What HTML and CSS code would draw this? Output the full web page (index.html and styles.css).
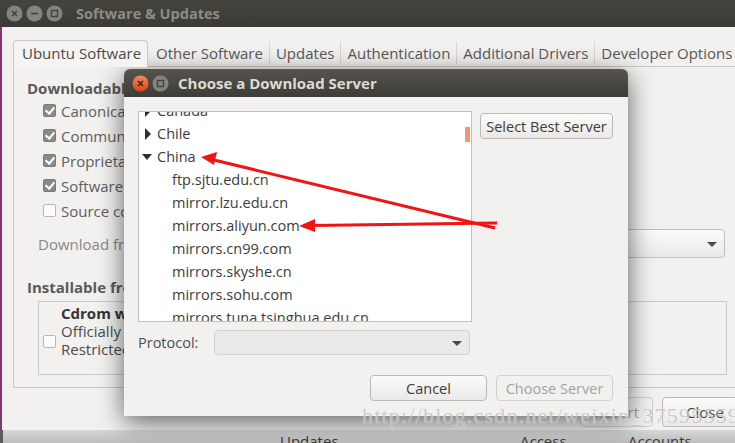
FILE: index.html
```html
<!DOCTYPE html>
<html lang="en">
<head>
    <meta charset="UTF-8">
    <title>Software &amp; Updates</title>
    <link rel="stylesheet" href="styles.css">
</head>
<body>
    <div class="screen">
        <div class="main">
            <div class="titlebar">
                <div class="wbtns">
                    <svg class="wbtn" width="17" height="17" viewBox="0 0 17 17"><circle cx="8.5" cy="8.5" r="8" fill="#85837e"/><path d="M6 6 L11 11 M11 6 L6 11" stroke="#45433f" stroke-width="1.6"/></svg>
                    <svg class="wbtn" width="17" height="17" viewBox="0 0 17 17"><circle cx="8.5" cy="8.5" r="8" fill="#85837e"/><path d="M5 8.5 H12" stroke="#45433f" stroke-width="1.6"/></svg>
                    <svg class="wbtn" width="17" height="17" viewBox="0 0 17 17"><circle cx="8.5" cy="8.5" r="8" fill="#85837e"/><rect x="5.5" y="5.5" width="6" height="6" fill="none" stroke="#45433f" stroke-width="1.4"/></svg>
                </div>
                <span class="title">Software &amp; Updates</span>
            </div>
            <div class="body">
                <div class="tabs">
                    <div class="tab active">Ubuntu Software</div>
                    <div class="tab">Other Software</div>
                    <div class="tab">Updates</div>
                    <div class="tab">Authentication</div>
                    <div class="tab">Additional Drivers</div>
                    <div class="tab">Developer Options</div>
                </div>
                <div class="panel">
                    <div class="section-title">Downloadable from the Internet</div>
                    <ul class="checks">
                        <li><span class="cb checked"></span>Canonical-supported free and open-source software (main)</li>
                        <li><span class="cb checked"></span>Community-maintained free and open-source software (universe)</li>
                        <li><span class="cb checked"></span>Proprietary drivers for devices (restricted)</li>
                        <li><span class="cb checked"></span>Software restricted by copyright or legal issues (multiverse)</li>
                        <li><span class="cb"></span>Source code</li>
                    </ul>
                    <div class="download-row">
                        <span class="dim">Download from:</span>
                        <div class="combo">Server for China<span class="arrow"></span></div>
                    </div>
                    <div class="section-title">Installable from CD-ROM/DVD</div>
                    <div class="cdrom">
                        <span class="cb"></span>
                        <div class="cdrom-text">
                            <b>Cdrom with Ubuntu 16.04 'Xenial Xerus'</b>
                            <span>Officially supported</span>
                            <span>Restricted copyright</span>
                        </div>
                    </div>
                </div>
                <div class="actions">
                    <button class="btn" disabled>Revert</button>
                    <button class="btn">Close</button>
                </div>
            </div>
        </div>
        <div class="behind">
            <span class="b-updates">Updates</span>
            <span class="b-access">Access</span>
            <span class="b-accounts">Accounts</span>
        </div>

        <div class="dialog">
            <div class="dlg-titlebar">
                <svg width="17" height="17" viewBox="0 0 17 17"><defs><linearGradient id="og" x1="0" y1="0" x2="0" y2="1"><stop offset="0" stop-color="#f7875a"/><stop offset="1" stop-color="#dc4413"/></linearGradient></defs><circle cx="8.5" cy="8.5" r="8" fill="url(#og)"/><path d="M6 6 L11 11 M11 6 L6 11" stroke="#3a2a22" stroke-width="1.6"/></svg>
                <svg width="17" height="17" viewBox="0 0 17 17"><circle cx="8.5" cy="8.5" r="8" fill="#85837e"/><rect x="5.5" y="5.5" width="6" height="6" fill="none" stroke="#45433f" stroke-width="1.4"/></svg>
                <span class="dlg-title">Choose a Download Server</span>
            </div>
            <div class="dlg-body">
                <div class="dlg-top">
                    <div class="tree">
                        <div class="tree-rows">
                            <div class="row country"><span class="exp right"></span>Canada</div>
                            <div class="row country"><span class="exp right"></span>Chile</div>
                            <div class="row country"><span class="exp down"></span>China</div>
                            <div class="row mirror">ftp.sjtu.edu.cn</div>
                            <div class="row mirror">mirror.lzu.edu.cn</div>
                            <div class="row mirror">mirrors.aliyun.com</div>
                            <div class="row mirror">mirrors.cn99.com</div>
                            <div class="row mirror">mirrors.skyshe.cn</div>
                            <div class="row mirror">mirrors.sohu.com</div>
                            <div class="row mirror">mirrors.tuna.tsinghua.edu.cn</div>
                        </div>
                        <span class="scroll-ind"></span>
                    </div>
                    <button class="btn best">Select Best Server</button>
                </div>
                <div class="protocol-row">
                    <span class="proto-label">Protocol:</span>
                    <div class="combo off"><span class="arrow"></span></div>
                </div>
                <div class="dlg-actions">
                    <button class="btn">Cancel</button>
                    <button class="btn" disabled>Choose Server</button>
                </div>
            </div>
        </div>

        <svg class="arrows" width="735" height="443" viewBox="0 0 735 443">
            <line x1="495" y1="228" x2="214" y2="160" stroke="#f21414" stroke-width="3"/>
            <polygon points="201,157 217,152 214,165" fill="#f21414"/>
            <line x1="497" y1="223" x2="312" y2="225.5" stroke="#f21414" stroke-width="3"/>
            <polygon points="299,226 315,219 315,232" fill="#f21414"/>
        </svg>

        <div class="watermark">http://blog.csdn.net/weixin_37595559</div>
    </div>
</body>
</html>
```

FILE: styles.css
```css
* {
    box-sizing: border-box;
}

body {
    margin: 0;
    font-family: 'Open Sans', 'Noto Sans', sans-serif;
    font-size: 15px;
    color: #3c3c3c;
}

.screen {
    position: relative;
    width: 735px;
    height: 443px;
    overflow: hidden;
    background: #c8c8c8;
}

/* main window */
.main {
    width: 760px;
    height: 430px;
    display: flex;
    flex-direction: column;
}

.titlebar {
    height: 27px;
    flex: none;
    display: flex;
    align-items: center;
    background: linear-gradient(#46443f, #3b3a36);
}

.wbtns {
    display: flex;
    gap: 3px;
    margin-left: 6px;
}

.title {
    margin-left: 13px;
    font-weight: 700;
    font-size: 14.5px;
    color: #8e8b85;
}

.body {
    flex: 1;
    display: flex;
    flex-direction: column;
    background: #f2f1f0;
    border-left: 2px solid #7d3a6f;
    padding: 13px 0 0 11px;
}

.tabs {
    display: flex;
    height: 26px;
    align-items: center;
}

.tab {
    padding: 0 6px;
    color: #585858;
    height: 22px;
    line-height: 22px;
    border-left: 1px solid #d8d4cf;
    white-space: nowrap;
}

.tab.active {
    height: 27px;
    line-height: 25px;
    margin-top: 1px;
    padding: 0 6px 0 8px;
    color: #4a4a4a;
    border: 1px solid #cdc9c4;
    border-bottom: none;
    border-radius: 4px 4px 0 0;
    background: #f5f4f3;
    margin-right: 2px;
    position: relative;
    z-index: 1;
}

.tab.active + .tab {
    border-left: none;
}

.panel {
    width: 728px;
    height: 322px;
    border: 1px solid #cdc9c4;
    padding: 12px 0 0 13px;
    display: flex;
    flex-direction: column;
}

.section-title {
    font-weight: 700;
    color: #5a5a5a;
    height: 18px;
    line-height: 18px;
    white-space: nowrap;
}

.checks {
    list-style: none;
    margin: 1px 0 0 0;
    padding: 0 0 0 16px;
}

.checks li {
    height: 25px;
    display: flex;
    align-items: center;
    color: #5e5e5e;
    white-space: nowrap;
}

.cb {
    width: 13px;
    height: 13px;
    flex: none;
    border: 1px solid #b9b6b1;
    border-radius: 2px;
    background: #fcfcfc;
    margin-right: 5px;
    position: relative;
}

.cb.checked {
    background: #8a8a88;
    border-color: #7c7b78;
}

.cb.checked::after {
    content: "";
    position: absolute;
    left: 3px;
    top: 0px;
    width: 4px;
    height: 7px;
    border: solid #fff;
    border-width: 0 2px 2px 0;
    transform: rotate(40deg);
}

.download-row {
    margin-top: 6px;
    height: 29px;
    display: flex;
    align-items: center;
    padding-left: 11px;
    padding-right: 15px;
}

.dim {
    color: #888;
}

.combo {
    margin-left: auto;
    width: 300px;
    height: 29px;
    border: 1px solid #c3bfba;
    border-radius: 4px;
    background: linear-gradient(#fafafa, #eceae8);
    display: flex;
    align-items: center;
    padding-left: 8px;
    position: relative;
    color: #4a4a4a;
    white-space: nowrap;
}

.arrow {
    position: absolute;
    right: 7px;
    top: 50%;
    margin-top: -2px;
    border-left: 5px solid transparent;
    border-right: 5px solid transparent;
    border-top: 5px solid #4a4a4a;
}

.download-row + .section-title {
    margin-top: 20px;
}

.cdrom {
    margin: 5px 13px 0 11px;
    height: 74px;
    border: 1px solid #cdc9c4;
    display: flex;
    align-items: center;
    padding-left: 4px;
}

.cdrom .cb {
    margin-top: 6px;
}

.cdrom-text {
    align-self: flex-start;
    padding-top: 2px;
    display: flex;
    flex-direction: column;
    line-height: 18px;
    color: #4a4a4a;
    white-space: nowrap;
}

.cdrom-text b {
    color: #333;
}

.actions {
    display: flex;
    justify-content: flex-start;
    gap: 9px;
    margin-top: 9px;
    padding-left: 567px;
}

.btn {
    font-family: inherit;
    font-size: 15px;
    height: 30px;
    padding: 0 12px;
    border: 1px solid #bcb8b3;
    border-radius: 4px;
    background: linear-gradient(#fbfbfa, #ebe9e7);
    color: #3c3c3c;
    white-space: nowrap;
}

.btn:disabled {
    color: #a4a29e;
    border-color: #d3cfca;
    background: #f2f1f0;
}

.actions .btn {
    width: 73px;
    padding: 0;
}

.actions .btn + .btn {
    width: 86px;
    text-align: left;
    padding-left: 23px;
}

/* window behind */
.behind {
    height: 13px;
    background: linear-gradient(#d7d7d7, #bdbdbd);
    border-left: 3px solid #5c5c5c;
    position: relative;
    white-space: nowrap;
    font-size: 15px;
    color: #3a3a3a;
}

.behind span {
    position: absolute;
    top: 1px;
}

.b-updates { left: 277px; }
.b-access { left: 517px; }
.b-accounts { left: 625px; }

/* dialog */
.dialog {
    position: absolute;
    left: 124px;
    top: 69px;
    width: 504px;
    height: 347px;
    border-radius: 6px 6px 0 0;
    background: #f2f1f0;
    box-shadow: 0 6px 26px rgba(0, 0, 0, 0.6);
    font-size: 14.5px;
}

.dlg-titlebar {
    height: 28px;
    border-radius: 6px 6px 0 0;
    background: linear-gradient(#57544e, #3d3c38);
    display: flex;
    align-items: center;
    gap: 3px;
    padding-left: 8px;
}

.dlg-title {
    margin-left: 6px;
    font-weight: 700;
    font-size: 15px;
    color: #dfdbd2;
}

.dlg-body {
    padding: 14px 15px 0 14px;
}

.dlg-top {
    display: flex;
    align-items: flex-start;
    gap: 8px;
}

.tree {
    width: 334px;
    height: 211px;
    border: 1px solid #c3bfba;
    background: #fff;
    overflow: hidden;
    position: relative;
}

.tree-rows {
    margin-top: -13px;
}

.row {
    height: 23px;
    line-height: 23px;
    white-space: nowrap;
    color: #3c3c3c;
    position: relative;
}

.row.country {
    padding-left: 18px;
}

.row.mirror {
    padding-left: 33px;
}

.exp {
    position: absolute;
    top: 50%;
}

.exp.right {
    left: 6px;
    margin-top: -6px;
    border-top: 6px solid transparent;
    border-bottom: 6px solid transparent;
    border-left: 6px solid #2f2f2f;
}

.exp.down {
    left: 3px;
    margin-top: -3px;
    border-left: 5px solid transparent;
    border-right: 5px solid transparent;
    border-top: 6px solid #2f2f2f;
}

.scroll-ind {
    position: absolute;
    right: 1px;
    top: 15px;
    width: 5px;
    height: 15px;
    background: #f2946c;
}

.dialog .btn {
    font-size: 14.5px;
}

.btn.best {
    height: 26px;
    width: 133px;
    margin-top: 2px;
    padding: 0;
}

.protocol-row {
    display: flex;
    align-items: center;
    margin-top: 8px;
    height: 25px;
}

.proto-label {
    width: 76px;
    color: #4c4c4c;
}

.combo.off {
    margin-left: 0;
    width: 256px;
    height: 25px;
    background: #ebeae8;
    border-color: #d5d1cc;
}

.dlg-actions {
    display: flex;
    justify-content: flex-end;
    gap: 9px;
    margin-top: 20px;
}

.dlg-actions .btn {
    width: 117px;
    height: 26px;
    padding: 0;
}

/* overlays */
.arrows {
    position: absolute;
    left: 0;
    top: 0;
    pointer-events: none;
}

.watermark {
    position: absolute;
    left: 362px;
    top: 403px;
    font-family: 'Liberation Serif', serif;
    font-size: 22px;
    letter-spacing: 1.2px;
    color: rgba(160, 160, 160, 0.55);
    text-shadow: 0 0 1px rgba(255, 255, 255, 0.8);
    white-space: nowrap;
}
```
